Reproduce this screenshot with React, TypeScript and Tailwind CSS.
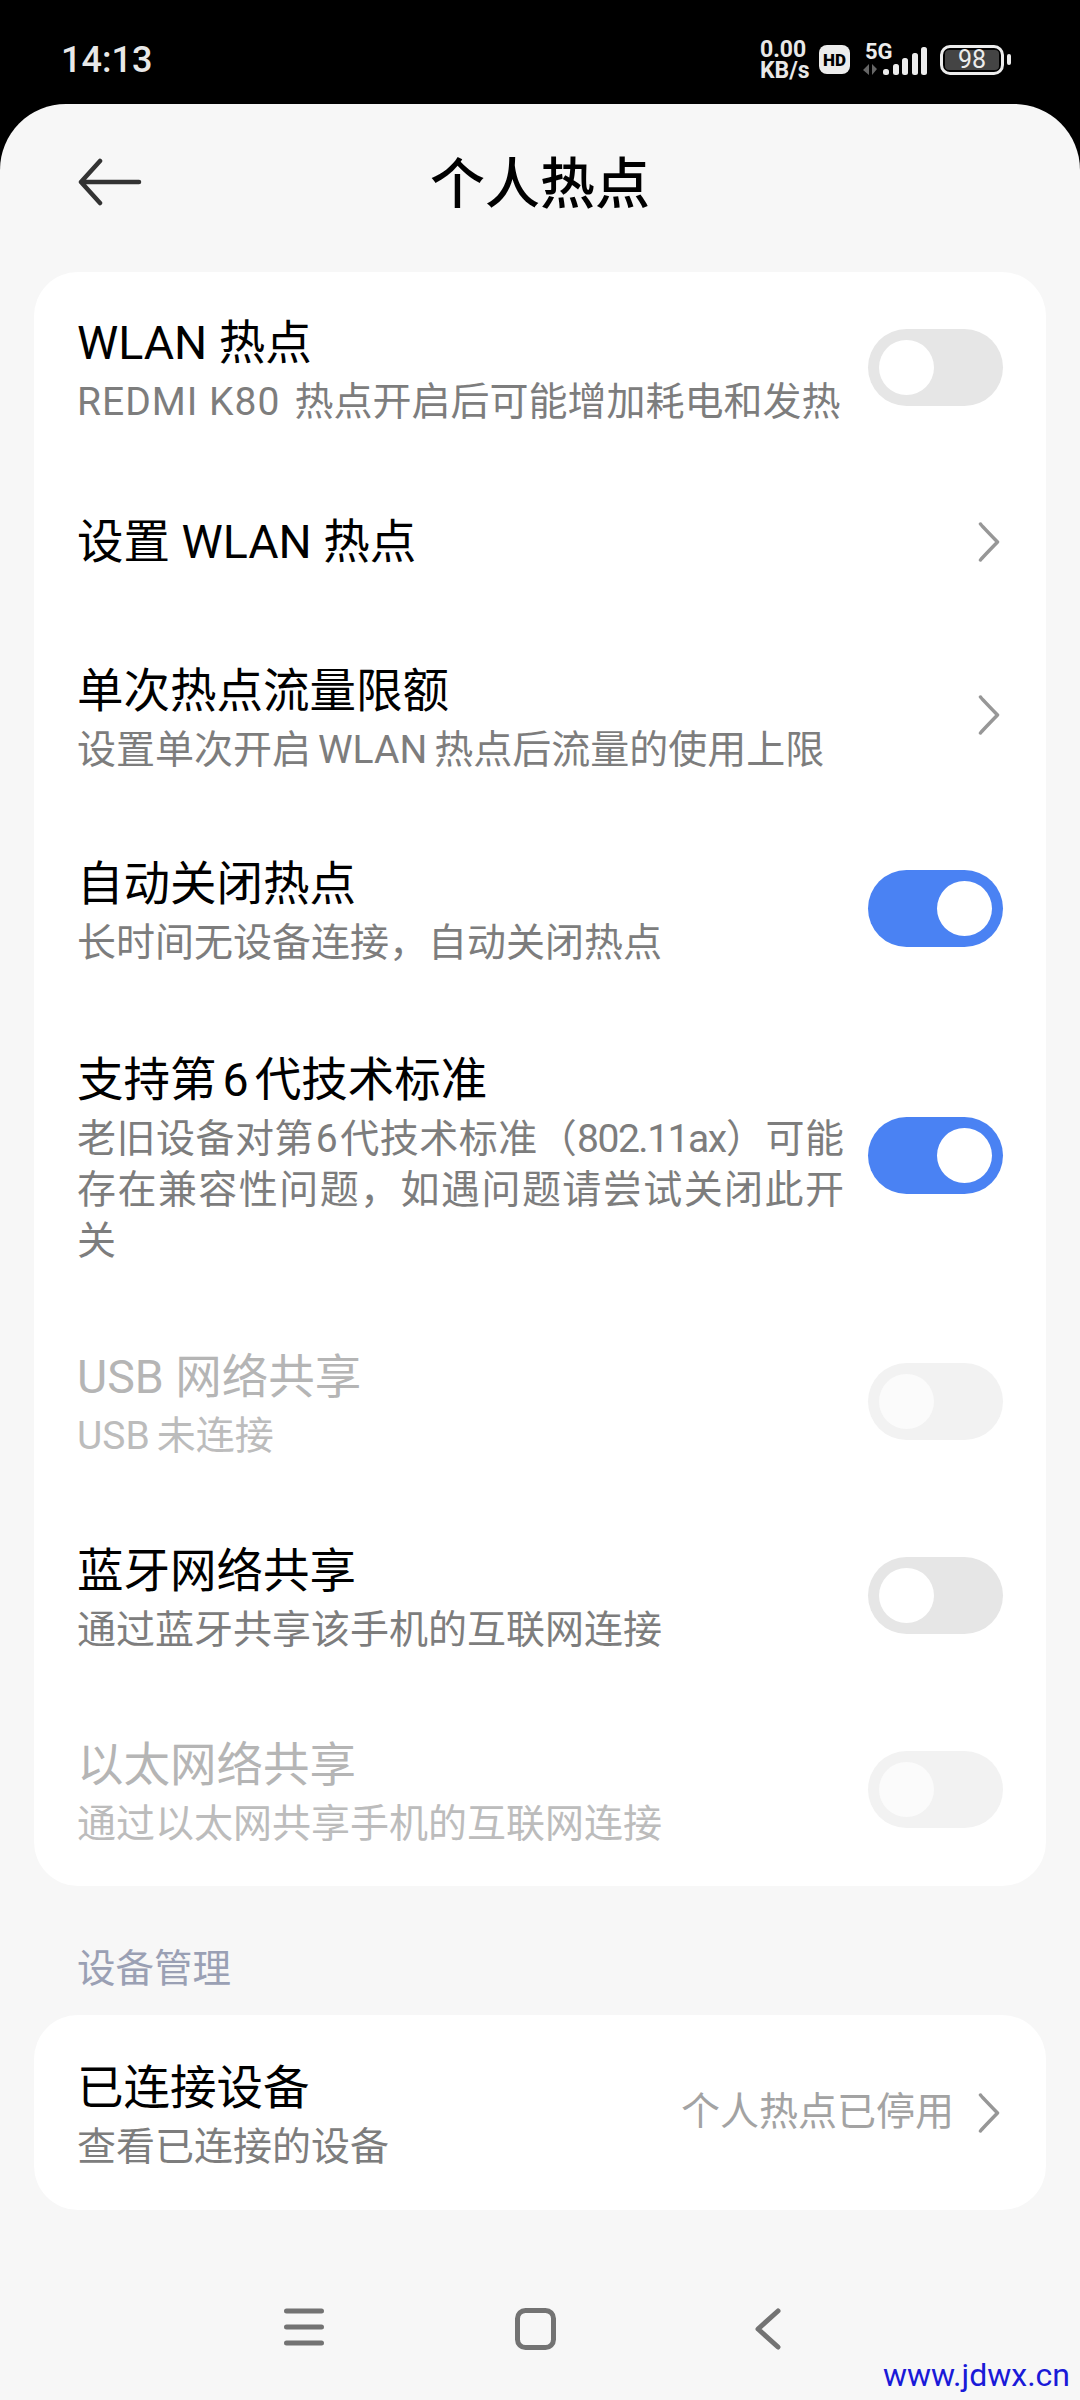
const cjk = "font-['Roboto','Noto_Sans_CJK_SC',sans-serif]";

function Toggle({ on = false, disabled = false }: { on?: boolean; disabled?: boolean }) {
  const track = on ? "bg-[#4a82f3]" : disabled ? "bg-[#f2f2f2]" : "bg-[#e6e6e6]";
  const knob = disabled ? "bg-[#fbfbfb]" : "bg-white";
  return (
    <div className={`w-[135px] h-[77px] rounded-full shrink-0 flex items-center px-[11px] ${on ? "justify-end" : "justify-start"} ${track}`}>
      <div className={`w-[55px] h-[55px] rounded-full ${knob}`} />
    </div>
  );
}

function Chevron() {
  return (
    <svg width="22" height="40" viewBox="0 0 22 40" fill="none" className="shrink-0 mr-[3px]">
      <path d="M2.5 2 Q3 3 19.5 20 Q3 37 2.5 38" stroke="#979797" strokeWidth="3.5" strokeLinecap="round" strokeLinejoin="round" />
    </svg>
  );
}

function Row({ title, sub, right, disabled = false, className = "" }: { title: React.ReactNode; sub?: React.ReactNode; right: React.ReactNode; disabled?: boolean; className?: string }) {
  return (
    <div className={`flex items-center justify-between pl-[43px] pr-[43px] ${className}`}>
      <div className={`flex flex-col w-[767px] ${sub ? "pt-[6px]" : ""}`}>
        <div className={`text-[46.5px] leading-[60px] ${disabled ? "text-[#b5b5b5]" : "text-black"}`}>{title}</div>
        {sub && <div className={`mt-[4px] text-[39px] leading-[51px] text-justify ${disabled ? "text-[#bcbcbc]" : "text-[#7d7d7d]"}`}>{sub}</div>}
      </div>
      {right}
    </div>
  );
}

export default function App() {
  return (
    <div className={`w-[1080px] h-[2400px] bg-black overflow-hidden flex flex-col relative ${cjk}`}>
      <div className="h-[104px] flex items-center justify-between pl-[61px] pr-[69px] pt-[15px] shrink-0 text-[#e8e8e8]">
        <div className="text-[36px] leading-none font-medium">14:13</div>
        <div className="flex items-center">
          <div className="flex flex-col w-[48px] text-[23px] leading-[21px] font-bold items-start">
            <span>0.00</span>
            <span>KB/s</span>
          </div>
          <svg width="31" height="29" viewBox="0 0 31 29" className="ml-[11px]"><rect width="31" height="29" rx="8" fill="#ececec" /><text x="15.5" y="20.5" fontSize="17" fontWeight="900" textAnchor="middle" fill="#000" fontFamily="Roboto">HD</text></svg>
          <div className="relative w-[66px] h-[34px] ml-[12px]">
            <span className="absolute left-[3px] top-[-2px] text-[22px] leading-[22px] font-bold text-[#ececec]">5G</span>
            <svg width="66" height="34" viewBox="0 0 66 34">
              <path d="M7 21v11l-6-5zM10 21v11l5-6z" fill="#666" />
              <rect x="21" y="26" width="6" height="6" rx="2.5" fill="#ececec" />
              <rect x="31" y="21" width="6" height="11" rx="2.5" fill="#ececec" />
              <rect x="40" y="15" width="6" height="17" rx="2.5" fill="#ececec" />
              <rect x="50" y="10" width="6" height="22" rx="2.5" fill="#ececec" />
              <rect x="59" y="4" width="6" height="28" rx="2.5" fill="#ececec" />
            </svg>
          </div>
          <div className="flex items-center gap-[3px] ml-[12px]">
            <div className="w-[64px] h-[30px] rounded-[10px] border-[3px] border-[#ececec] p-[2px] flex">
              <div className="flex-1 bg-[#444] rounded-[4px] flex items-center justify-center text-[25px] leading-none text-[#ececec]">98</div>
            </div>
            <div className="w-[4px] h-[11px] rounded-full bg-[#ececec]" />
          </div>
        </div>
      </div>

      <div className="flex-1 bg-[#f7f7f7] rounded-t-[66px] flex flex-col">
        <div className="h-[168px] relative flex items-center justify-center shrink-0">
          <svg width="64" height="48" viewBox="0 0 64 48" fill="none" className="absolute left-[78px] top-[54px]">
            <path d="M22 3 L3 24 L22 45 M3 24 H61" stroke="#333" strokeWidth="4.5" strokeLinecap="round" strokeLinejoin="round" />
          </svg>
          <div className="text-[55px] leading-none text-black font-medium pb-[8px]">个人热点</div>
        </div>

        <div className="mx-[34px] bg-white rounded-[44px] flex flex-col">
          <Row className="h-[190px]" title="WLAN 热点" sub={<><span className="tracking-[1px] mr-[14px]">REDMI K80</span>热点开启后可能增加耗电和发热</>} right={<Toggle />} />
          <Row className="h-[156px] pt-[3px]" title="设置 WLAN 热点" right={<Chevron />} />
          <Row className="h-[194px]" title="单次热点流量限额" sub={<>设置单次开启<span className="mx-[7px]">WLAN</span>热点后流量的使用上限</>} right={<Chevron />} />
          <Row className="h-[193px]" title="自动关闭热点" sub="长时间无设备连接，自动关闭热点" right={<Toggle on />} />
          <Row className="h-[300px]" title={<>支持第<span className="mx-[6px]">6</span>代技术标准</>} sub={<>老旧设备对第<span className="mx-[2px]">6</span>代技术标准（<span className="tracking-[-1.5px]">802.11ax</span>）可能存在兼容性问题，如遇问题请尝试关闭此开关</>} right={<Toggle on />} />
          <Row className="h-[193px]" title="USB 网络共享" sub={<><span className="mr-[7px]">USB</span>未连接</>} disabled right={<Toggle disabled />} />
          <Row className="h-[194px]" title="蓝牙网络共享" sub="通过蓝牙共享该手机的互联网连接" right={<Toggle />} />
          <Row className="h-[194px]" title="以太网络共享" sub="通过以太网共享手机的互联网连接" disabled right={<Toggle disabled />} />
        </div>

        <div className="h-[129px] flex items-center pl-[77px] pt-[36px] text-[38.5px] text-[#9aa0b4] shrink-0">设备管理</div>

        <div className="mx-[34px] bg-white rounded-[44px]">
          <div className="h-[195px] flex items-center justify-between pl-[43px] pr-[43px]">
            <div className="flex flex-col pt-[6px]">
              <div className="text-[46.5px] leading-[60px] text-black">已连接设备</div>
              <div className="mt-[4px] text-[39px] leading-[51px] text-[#7d7d7d]">查看已连接的设备</div>
            </div>
            <div className="flex items-center gap-[24px]">
              <span className="text-[39px] text-[#a3a3a3]">个人热点已停用</span>
              <Chevron />
            </div>
          </div>
        </div>

        <div className="flex-1 relative flex items-start pt-[98px] pl-[284px]">
          <svg width="40" height="38" viewBox="0 0 40 38" fill="none"><path d="M2.5 3H37.5M2.5 19H37.5M2.5 35H37.5" stroke="#737373" strokeWidth="5" strokeLinecap="round" /></svg>
          <svg width="41" height="42" viewBox="0 0 41 42" fill="none" className="ml-[191px]"><rect x="2.5" y="2.5" width="36" height="37" rx="8" stroke="#737373" strokeWidth="5" /></svg>
          <svg width="27" height="42" viewBox="0 0 27 42" fill="none" className="ml-[198px]"><path d="M24 3 L4 21 L24 39" stroke="#737373" strokeWidth="5" strokeLinecap="round" strokeLinejoin="round" /></svg>
          <div className="absolute right-[10px] bottom-[9px] text-[32px] leading-none text-[#1a1ad8]">www.jdwx.cn</div>
        </div>
      </div>
    </div>
  );
}
